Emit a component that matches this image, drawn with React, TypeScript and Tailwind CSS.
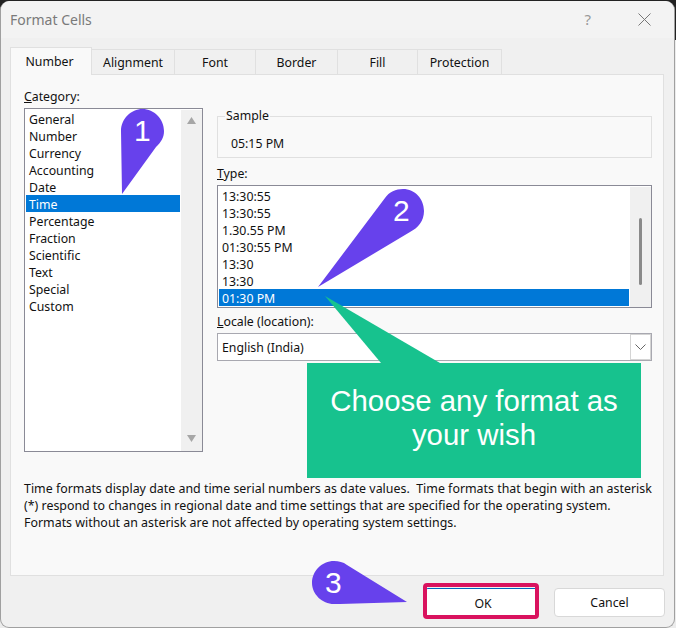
import React from 'react';

const tabs = ['Number', 'Alignment', 'Font', 'Border', 'Fill', 'Protection'];
const categories = ['General', 'Number', 'Currency', 'Accounting', 'Date', 'Time', 'Percentage', 'Fraction', 'Scientific', 'Text', 'Special', 'Custom'];
const types = ['13:30:55', '13:30:55', '1.30.55 PM', '01:30:55 PM', '13:30', '13:30', '01:30 PM'];
const tabWidths = ['w-[82px]', 'w-[83px]', 'w-[81px]', 'w-[82px]', 'w-[80px]', 'w-[84px]'];

const Row: React.FC<{ label: string; selected?: boolean }> = ({ label, selected }) => (
  <div className={`h-[17px] leading-[19px] pl-[3px] ${selected ? 'bg-[#0078d7] text-white' : ''}`}>{label}</div>
);

const Pin: React.FC<{ className: string; w: number; h: number; d: string; label: string; labelClass: string }> = ({ className, w, h, d, label, labelClass }) => (
  <div className={`absolute ${className}`}>
    <svg width={w} height={h} viewBox={`0 0 ${w} ${h}`} className="block">
      <path d={d} fill="#6741ec" />
    </svg>
    <span className={`absolute text-white text-[30px] leading-none font-['Liberation_Sans',sans-serif] ${labelClass}`}>{label}</span>
  </div>
);

export default function App() {
  return (
    <div className="relative w-[676px] h-[628px] overflow-hidden bg-[linear-gradient(#222222_0,#222222_40px,#ececec_40px)] text-[12.3px] text-[#111111] font-['Noto_Sans','Open_Sans',sans-serif]">
      <div className="w-[675px] h-[627px] mt-px rounded-[9px] border-x border-b border-[#a0a0a0] bg-[#f0f0f0] flex flex-col">
        {/* title bar */}
        <div className="h-[37px] shrink-0 rounded-t-[9px] bg-[#f3f3f3] flex items-center pl-[9px] pr-[23px]">
          <span className="text-[14px] text-[#7a7a7a] flex-1">Format Cells</span>
          <span className="text-[15px] text-[#999999] mr-[47px]">?</span>
          <svg width="13" height="13" viewBox="0 0 13 13">
            <path d="M0.5 0.5L12.5 12.5M12.5 0.5L0.5 12.5" stroke="#777777" strokeWidth="1" fill="none" />
          </svg>
        </div>

        {/* tabs */}
        <div className="flex items-end h-[36px] shrink-0 pl-[9px]">
          {tabs.map((t, i) => (
            <div
              key={t}
              className={`${tabWidths[i]} flex items-center justify-center border border-[#e0e0e0] ${
                i === 0 ? 'h-[28px] bg-[#f9f9f9] border-b-0 relative top-px pr-[3px] pt-[2px]' : 'h-[25px] bg-[#f0f0f0] border-l-0 border-b-0 pt-[2px]'
              }`}
            >
              {t}
            </div>
          ))}
        </div>

        {/* panel */}
        <div className="w-[654px] h-[502px] shrink-0 ml-[9px] bg-[#f9f9f9] border border-[#e0e0e0] pl-[13px] pt-[14px] flex flex-col">
          <div className="flex h-[364px]">
            <div className="w-[179px] shrink-0">
              <div className="h-[19px] leading-[15px]"><u>C</u>ategory:</div>
              <div className="flex h-[344px] bg-white border border-[#8a8a96] pl-px pt-px">
                <div className="w-[154px]">
                  {categories.map((c) => <Row key={c} label={c} selected={c === 'Time'} />)}
                </div>
                <div className="flex-1 ml-px bg-[#f0f0f0] flex flex-col items-center justify-between pt-[7px] pb-[9px]">
                  <svg width="9" height="7" viewBox="0 0 9 7"><path d="M4.5 0L9 7H0Z" fill="#a6a6a6" /></svg>
                  <svg width="9" height="7" viewBox="0 0 9 7"><path d="M0 0H9L4.5 7Z" fill="#a6a6a6" /></svg>
                </div>
              </div>
            </div>

            <div className="w-[435px] ml-[14px] shrink-0">
              <fieldset className="h-[49px] border border-[#e0e0e0] pl-[7px] mt-[20px]">
                <legend className="px-px leading-[14px]">Sample</legend>
                <div className="pl-[6px] pt-[12px] leading-[17px]">05:15 PM</div>
              </fieldset>
              <div className="h-[19px] mt-[8px] leading-[15px]"><u>T</u>ype:</div>
              <div className="flex h-[123px] bg-white border border-[#8a8a96] pl-px pt-px">
                <div className="w-[410px]">
                  {types.map((c, i) => <Row key={i} label={c} selected={i === 6} />)}
                </div>
                <div className="flex-1 ml-px bg-[#f0f0f0] flex justify-center pt-[31px] pr-px">
                  <div className="w-[3px] h-[67px] rounded-full bg-[#8a8a8a]" />
                </div>
              </div>
              <div className="h-[19px] mt-[6px] leading-[15px]"><u>L</u>ocale (location):</div>
              <div className="flex items-center h-[28px] bg-white border border-[#a8a8b0] pl-[4px]">
                <span className="flex-1 pt-[2px]">English (India)</span>
                <div className="w-[21px] h-[26px] border border-[#d4d4d4] flex items-center justify-center">
                  <svg width="11" height="6" viewBox="0 0 11 6"><path d="M0.5 0.5L5.5 5.5L10.5 0.5" stroke="#666666" fill="none" /></svg>
                </div>
              </div>
            </div>
          </div>

          <p className="w-[634px] mt-[27px] text-[12.42px] leading-[17px] whitespace-pre">
            {'Time formats display date and time serial numbers as date values.  Time formats that begin with an asterisk\n(*) respond to changes in regional date and time settings that are specified for the operating system.\nFormats without an asterisk are not affected by operating system settings.'}
          </p>
        </div>

        {/* buttons */}
        <div className="flex justify-end gap-[17px] pt-[12px] pr-[9px]">
          <button className="w-[111px] h-[29px] pl-[3px] pt-[2px] bg-white rounded-[2px] border-t border-t-[#0067c0]">OK</button>
          <button className="w-[111px] h-[29px] pt-[2px] bg-white rounded-[4px] border border-[#d8d8d8]">Cancel</button>
        </div>
      </div>

      {/* annotations */}
      <div className="absolute left-[423px] top-[583px] w-[116px] h-[36px] rounded-[4px] border-[4px] border-[#d9125e]" />

      <svg width="140" height="80" viewBox="0 0 140 80" className="absolute left-[307px] top-[295px]">
        <path d="M18 1L74 68H133Z" fill="#17c28e" />
      </svg>
      <div className="absolute left-[307px] top-[363px] w-[334px] h-[115px] bg-[#17c28e] text-white text-[29.4px] leading-[34px] text-center pt-[21px] px-[10px] font-['Liberation_Sans',sans-serif]">
        Choose any format as your wish
      </div>

      <Pin className="left-[121px] top-[109px]" w={44} h={86}
        d="M1 85L0 22C0 10 10 0 21.5 0C33 0 43 10 43 22C43 29 40 33 35 38Z" label="1" labelClass="left-[13px] top-[7px]" />
      <Pin className="left-[318px] top-[189px]" w={108} h={100}
        d="M0 98L67 9C71 3 78 0 85 0C97 0 106 10 106 22C106 32 100 39 92 43Z" label="2" labelClass="left-[75px] top-[7px]" />
      <Pin className="left-[312px] top-[561px]" w={96} h={44}
        d="M22 0C27 0 31 1 35 4L95 41L28 43C26 43 24 43 22 43C10 43 0 33 0 22C0 10 10 0 22 0Z" label="3" labelClass="left-[13px] top-[7px]" />
    </div>
  );
}
